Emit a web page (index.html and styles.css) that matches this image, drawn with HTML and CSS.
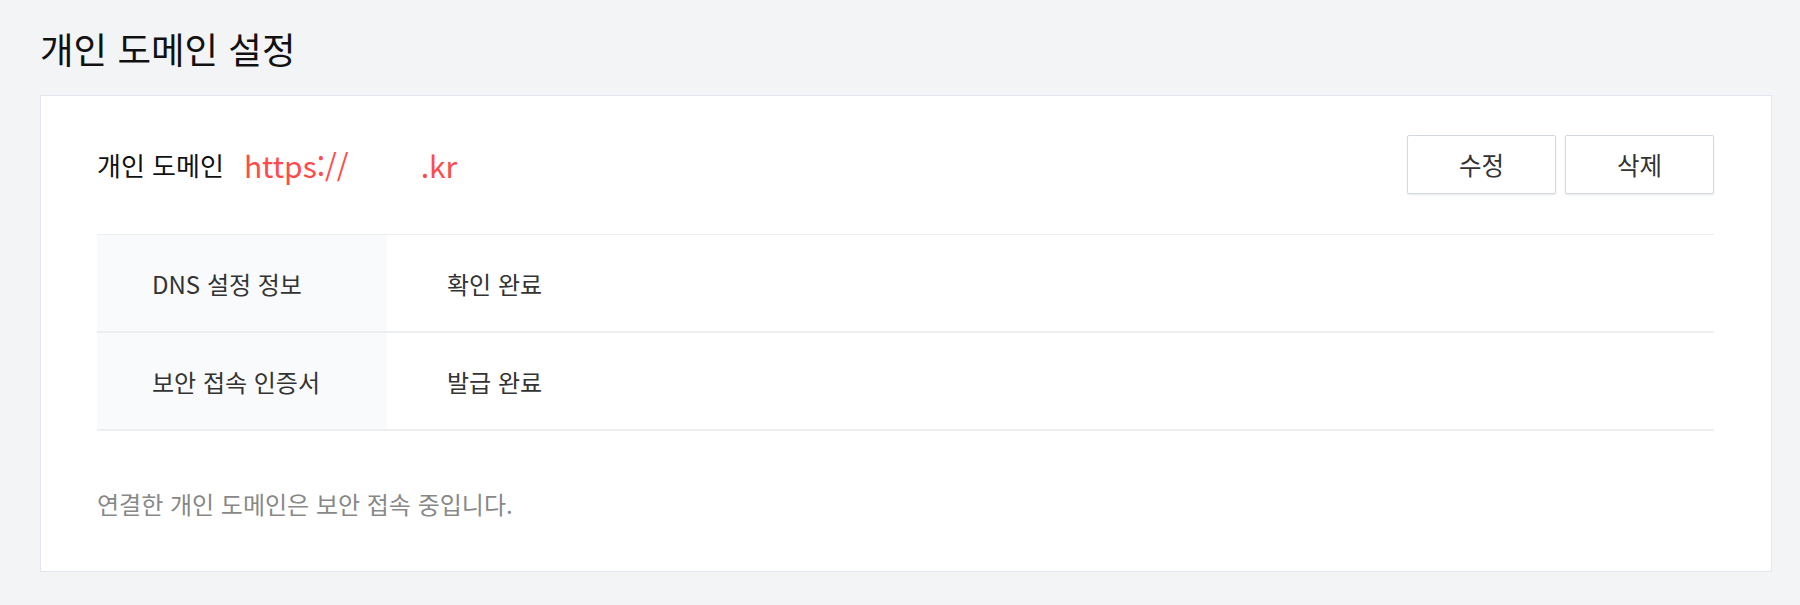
FILE: index.html
```html
<!DOCTYPE html>
<html lang="ko">
<head>
<meta charset="utf-8">
<title>개인 도메인 설정</title>
<link rel="stylesheet" href="styles.css">
</head>
<body>
<div class="page">
  <h1 class="page-title">개인 도메인 설정</h1>
  <section class="card">
    <div class="domain-head">
      <div class="domain-info">
        <span class="domain-label">개인 도메인</span>
        <span class="domain-url">https://<span class="masked"></span>.kr</span>
      </div>
      <div class="actions">
        <button class="btn" type="button">수정</button>
        <button class="btn" type="button">삭제</button>
      </div>
    </div>
    <div class="info-table">
      <div class="info-row">
        <div class="info-key">DNS 설정 정보</div>
        <div class="info-val">확인 완료</div>
      </div>
      <div class="info-row">
        <div class="info-key">보안 접속 인증서</div>
        <div class="info-val">발급 완료</div>
      </div>
    </div>
    <p class="note">연결한 개인 도메인은 보안 접속 중입니다.</p>
  </section>
</div>
</body>
</html>
```

FILE: styles.css
```css
html, body {
  margin: 0;
  padding: 0;
  background: #f3f4f6;
}

body {
  font-family: "Noto Sans CJK KR", "Noto Sans", sans-serif;
  color: #222;
}

.page {
  padding: 0 28px 0 40px;
}

.page-title {
  margin: 0;
  padding: 22px 0 20px 0;
  height: 53px;
  line-height: 53px;
  font-size: 36.5px;
  font-weight: 400;
  color: #111;
}

.card {
  background: #fff;
  border: 1px solid #e2e6ee;
  padding: 39px 57px 50px 56px;
}

.domain-head {
  display: flex;
  align-items: center;
  justify-content: space-between;
  height: 59px;
}

.domain-info {
  display: flex;
  align-items: center;
  gap: 20px;
}

.domain-label {
  font-size: 26px;
  color: #111;
}

.domain-url {
  font-size: 30px;
  color: #ff4b4b;
  display: flex;
  align-items: center;
}

.masked {
  display: inline-block;
  width: 72px;
}

.actions {
  display: flex;
  gap: 9px;
}

.btn {
  width: 149px;
  height: 59px;
  background: #fff;
  border: 1px solid #d3d8e1;
  border-radius: 2px;
  box-shadow: 0 1px 2px rgba(30, 40, 60, 0.1);
  font-family: inherit;
  font-size: 24.5px;
  color: #333;
  padding: 0;
}

.info-table {
  margin-top: 40px;
  border-top: 1px solid #eceef2;
}

.info-row {
  display: flex;
  height: 96px;
  border-bottom: 2px solid #eceef2;
}

.info-key {
  width: 235px;
  padding-left: 55px;
  background: #f9fafc;
  display: flex;
  align-items: center;
  font-size: 24px;
  color: #333;
}

.info-val {
  padding-left: 60px;
  display: flex;
  align-items: center;
  font-size: 24px;
  color: #333;
}

.note {
  margin: 56px 0 0 0;
  line-height: 34px;
  font-size: 24px;
  color: #888;
}
```
